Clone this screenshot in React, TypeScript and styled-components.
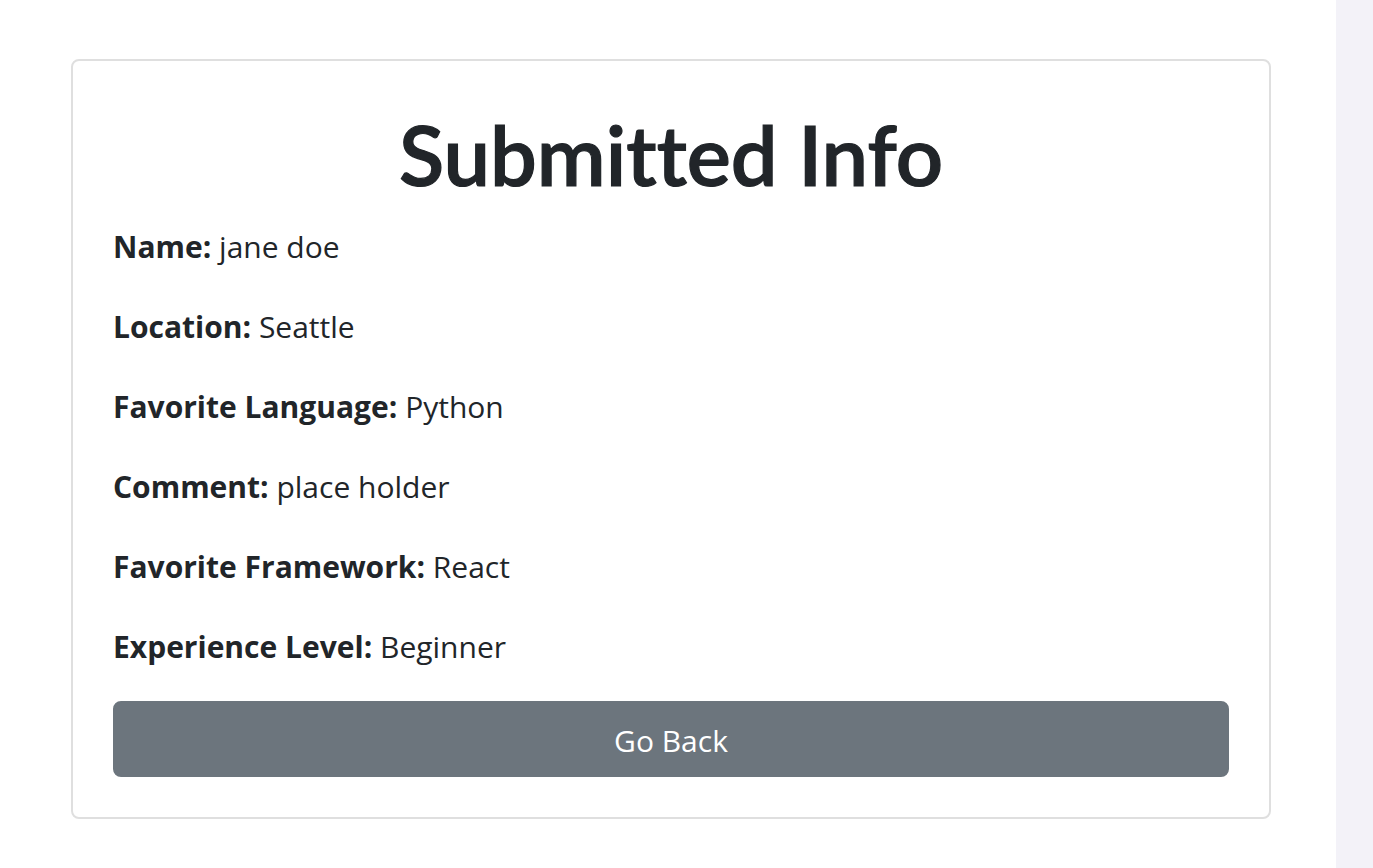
import React from "react";
import styled, { createGlobalStyle } from "styled-components";

const GlobalStyle = createGlobalStyle`
  html, body {
    margin: 0;
    padding: 0;
    background: #ffffff;
  }
  body {
    font-family: "Open Sans", "Noto Sans", sans-serif;
    color: #212529;
  }
`;

const fields = [
  { label: "Name", value: "jane doe" },
  { label: "Location", value: "Seattle" },
  { label: "Favorite Language", value: "Python" },
  { label: "Comment", value: "place holder" },
  { label: "Favorite Framework", value: "React" },
  { label: "Experience Level", value: "Beginner" },
];

export default function App() {
  return (
    <>
      <GlobalStyle />
      <Layout>
        <Main>
          <Card>
            <Title>Submitted Info</Title>
            {fields.map((f) => (
              <Field key={f.label}>
                <strong>{f.label}:</strong> {f.value}
              </Field>
            ))}
            <BackButton type="button">Go Back</BackButton>
          </Card>
        </Main>
        <SideStrip />
      </Layout>
    </>
  );
}

const Layout = styled.div`
  display: flex;
  width: 100%;
  height: 868px;
`;

const Main = styled.div`
  flex: 1;
  padding: 59px 0 0 71px;
`;

const SideStrip = styled.div`
  width: 37px;
  background: #f3f2f8;
`;

const Card = styled.div`
  width: 1200px;
  box-sizing: border-box;
  border: 2px solid #dfdfdf;
  border-radius: 8px;
  padding: 40px;
  display: flex;
  flex-direction: column;
`;

const Title = styled.h1`
  margin: 0 0 16px;
  text-align: center;
  font-family: Lato, "Open Sans", sans-serif;
  font-size: 83px;
  line-height: 106px;
  font-weight: 600;
  font-variant-ligatures: none;
  -webkit-text-stroke: 1.2px #212529;
  color: #212529;
`;

const Field = styled.p`
  margin: 0 0 32px;
  font-size: 30px;
  line-height: 48px;

  &:last-of-type {
    margin-bottom: 30px;
  }

  strong {
    font-weight: 700;
  }
`;

const BackButton = styled.button`
  width: 100%;
  box-sizing: border-box;
  border: 2px solid #6c757d;
  border-radius: 8px;
  background: #6c757d;
  color: #ffffff;
  font-family: inherit;
  font-size: 30px;
  line-height: 48px;
  padding: 14px 24px 10px;
  cursor: pointer;
`;
